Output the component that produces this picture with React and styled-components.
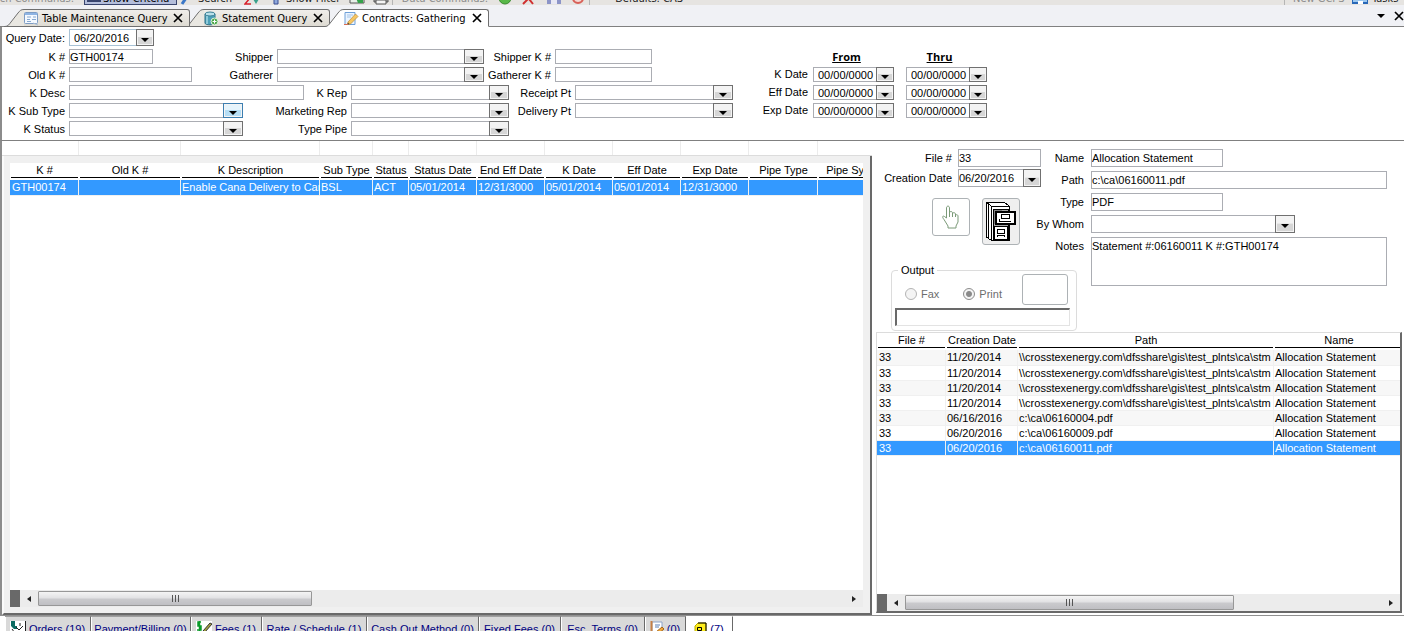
import React, { useId } from "react";
import styled, { createGlobalStyle } from "styled-components";

const queryColumns = [
  { name: "K #", width: 69 },
  { name: "Old K #", width: 102 },
  { name: "K Description", width: 139 },
  { name: "Sub Type", width: 53 },
  { name: "Status", width: 36 },
  { name: "Status Date", width: 68 },
  { name: "End Eff Date", width: 68 },
  { name: "K Date", width: 68 },
  { name: "Eff Date", width: 68 },
  { name: "Exp Date", width: 68 },
  { name: "Pipe Type", width: 69 },
  { name: "Pipe System", width: 78 },
];
const queryRows = [
  [
    "GTH00174",
    "",
    "Enable Cana Delivery to Can",
    "BSL",
    "ACT",
    "05/01/2014",
    "12/31/3000",
    "05/01/2014",
    "05/01/2014",
    "12/31/3000",
    "",
    "",
  ],
];

const fileColumns = [
  { name: "File #", width: 69 },
  { name: "Creation Date", width: 72 },
  { name: "Path", width: 256 },
  { name: "Name", width: 130 },
];
const sharePath = "\\\\crosstexenergy.com\\dfsshare\\gis\\test_plnts\\ca\\stm";
const fileRows = [
  ["33", "11/20/2014", sharePath, "Allocation Statement"],
  ["33", "11/20/2014", sharePath, "Allocation Statement"],
  ["33", "11/20/2014", sharePath, "Allocation Statement"],
  ["33", "11/20/2014", sharePath, "Allocation Statement"],
  ["33", "06/16/2016", "c:\\ca\\06160004.pdf", "Allocation Statement"],
  ["33", "06/20/2016", "c:\\ca\\06160009.pdf", "Allocation Statement"],
  ["33", "06/20/2016", "c:\\ca\\06160011.pdf", "Allocation Statement"],
];

const bottomTabs = [
  { text: "Orders (19)", width: 86, icon: "orders" },
  { text: "Payment/Billing (0)", width: 100 },
  { text: "Fees (1)", width: 71, icon: "fees" },
  { text: "Rate / Schedule (1)", width: 105 },
  { text: "Cash Out Method (0)", width: 112 },
  { text: "Fixed Fees (0)", width: 82 },
  { text: "Esc. Terms (0)", width: 84 },
  { text: "(0)", width: 41, icon: "notes" },
  { text: "(7)", width: 47, icon: "files", active: true },
];

const DownArrow = () => (
  <svg width="8" height="4" viewBox="0 0 8 4">
    <path d="M0 0h8L4 4z" fill="#000" />
  </svg>
);

const FormIcon = () => (
  <svg width="15" height="15" viewBox="0 0 15 15">
    <rect x="0.5" y="1.5" width="13" height="11" rx="1" fill="#f4f9ff" stroke="#7d9cc4" />
    <path d="M1 3h12" stroke="#8eb4e3" strokeWidth="2" />
    <path d="M3 6h4M3 8.500h3M9 6h3M8 8.500h4M3 10.500h4" stroke="#86a8d0" />
    <path d="M9 12l5 2" stroke="#a8bcd4" />
  </svg>
);

const DatabaseIcon = () => (
  <svg width="15" height="15" viewBox="0 0 15 15">
    <path d="M1 3v9c0 2.500 10 2.500 10 0V3z" fill="#4da0b8" stroke="#2f7187" />
    <ellipse cx="6" cy="3" rx="5" ry="2" fill="#b9e0ea" stroke="#3a8096" />
    <path d="M3 5v8" stroke="#a4d8e4" strokeWidth="1.500" />
    <circle cx="10.500" cy="10.500" r="3.500" fill="#4da84b" stroke="#e4f2df" />
    <path d="M8.500 10.500h4M10.500 8.500v4" stroke="#fff" />
  </svg>
);

const PencilIcon = () => (
  <svg width="15" height="15" viewBox="0 0 15 15">
    <path d="M1 1.500h10v12H1z" fill="#eaf4ff" stroke="#6fa0d8" />
    <path d="M3 4h6M3 6h4" stroke="#a4c3e6" />
    <path d="M4 11l7.500-8 2.500 2.500-7.500 7.500-3 .5z" fill="#f7c661" stroke="#b98a3a" strokeWidth=".7" />
    <path d="M3 14l1-2.500 1.500 1.500z" fill="#5b4630" />
    <path d="M0 13.500h4" stroke="#d76c52" />
  </svg>
);

const CloseIcon = () => (
  <svg width="10" height="10" viewBox="0 0 10 10">
    <path d="M1 1l8 8M9 1l-8 8" stroke="#000" strokeWidth="1.700" />
  </svg>
);

const HandIcon = () => (
  <svg width="20" height="24" viewBox="0 0 20 24">
    <path
      d="M5.500 13V3c0-2.500 3-2.500 3 0v7V8c0-2 3-2 3 0v3V9c0-2 3-1.500 3 0v2c0-2 2.500-1.500 2.500 0v6l-2 4v2h-8v-2l-4-6.500c-2.500-3-1-4 .5-3z"
      fill="#fff"
      stroke="#7b9a78"
    />
    <path d="M8.500 9v3M11.500 10v2M14.500 11v1" stroke="#7b9a78" fill="none" />
  </svg>
);

const CabinetIcon = () => (
  <svg width="32" height="42" viewBox="0 0 32 42" shapeRendering="crispEdges">
    <path d="M1 1h18l5 4v34H6l-5-3z" fill="#fff" stroke="#000" />
    <path d="M1 1l5 4h18M6 5v34M3.500 3v35" fill="none" stroke="#000" />
    <path d="M8 8h15v31H8z" fill="#a8a8a8" stroke="#000" />
    <path d="M9 9h8v14H9z" fill="#808080" />
    <path d="M11 11h19v12H11z" fill="#fff" stroke="#000" strokeWidth="2" />
    <path d="M16 13h8v4h-8z" fill="#fff" stroke="#000" />
    <path d="M14 20h12M14 18v3" stroke="#000" strokeWidth="1" />
    <path d="M9 25h13v13H9z" fill="#fff" stroke="#000" />
    <path d="M12 28h7v4h-7zM12 36v-2h7v2" fill="none" stroke="#000" />
  </svg>
);

const BottomIcon = ({ kind }) => {
  if (kind === "orders")
    return (
      <svg width="16" height="16" viewBox="0 0 16 16">
        <path d="M0 0h16v16H0z" fill="#fff" />
        <path d="M1 0h4v5h2v3H4L1 5z" fill="#0a6b62" />
        <path d="M6 6l3 3 4-4M15.500 0v16M2 8l5 7M10 2v3" stroke="#222" fill="none" />
      </svg>
    );
  if (kind === "fees")
    return (
      <svg width="16" height="16" viewBox="0 0 16 16">
        <path d="M0 0h16v16H0z" fill="#fff" />
        <path d="M5 1H2v4h3v4H1M3.500 0v11" stroke="#0a9a2a" strokeWidth="1.500" fill="none" />
        <path d="M7 10l7-8 2 1-7 8z" fill="#a8a340" stroke="#333" />
        <path d="M4 12l4 2 6-3" stroke="#222" fill="none" />
      </svg>
    );
  if (kind === "notes")
    return (
      <svg width="14" height="16" viewBox="0 0 14 16">
        <path d="M2 1h10v14H2z" fill="#fff" stroke="#8ca3c8" />
        <path d="M1.500 0v16" stroke="#c78045" strokeWidth="2" />
        <path d="M5 4h5M5 6h4" stroke="#5b7fb4" />
        <path d="M6 11l6-5 2 2-6 5z" fill="#f2a93b" stroke="#a5661a" />
      </svg>
    );
  return (
    <svg width="13" height="16" viewBox="0 0 13 16">
      <path d="M1 5l3-3h8v12l-3 2H1z" fill="#ffee1c" stroke="#b8a800" />
      <path d="M12 2v12M4 2h8M3.500 6.500h4v3h-4z" fill="none" stroke="#000" />
    </svg>
  );
};

const Arrow = styled.span`
  box-sizing: border-box;
  width: 18px;
  height: calc(100% + 2px);
  margin: -1px -1px 0 0;
  padding-top: 4px;
  border: 1px solid #707070;
  box-shadow: inset 0 0 0 1px #f4f4f4;
  background: ${({ $hot }) =>
    $hot
      ? "linear-gradient(#e5f4fc 45%, #b5def5 50%)"
      : "linear-gradient(#f3f3f3 45%, #d6d6d6 50%)"};
  border-color: ${({ $hot }) => ($hot ? "#3c7fb1" : "#707070")};
  display: flex;
  align-items: center;
  justify-content: center;
`;

const Field = ({ label, labelWidth, width, type = "text", value, hot, inset }) => {
  const id = useId();
  return (
    <FieldRow>
      <Label htmlFor={id} $width={labelWidth}>
        {label}
      </Label>
      {type === "select" && <Select id={id} width={width} hot={hot} />}
      {type === "date" && <DateBox id={id} width={width} value={value} inset={inset} />}
      {type === "text" && <Input id={id} $width={width} defaultValue={value} />}
    </FieldRow>
  );
};

const Select = ({ id, width, hot }) => (
  <Box $width={width}>
    <SelectInput id={id} defaultValue="">
      <option value=""></option>
    </SelectInput>
    <SelectArrow $hot={hot}>
      <DownArrow />
    </SelectArrow>
  </Box>
);

const DateBox = ({ id, width, value, inset = 4, name, tone }) => (
  <Box $width={width} $tone={tone}>
    <DateInput id={id} aria-label={name} defaultValue={value} $inset={inset} />
    <Arrow as="button" type="button" aria-label="Open calendar">
      <DownArrow />
    </Arrow>
  </Box>
);

const Grid = ({ columns, rows, selected, first }) => (
  <Table $width={columns.reduce((sum, c) => sum + c.width, 0)}>
    <colgroup>
      {columns.map((c) => (
        <Col key={c.name} $width={c.width} />
      ))}
    </colgroup>
    <thead>
      <tr>
        {columns.map((c) => (
          <Th key={c.name}>
            <span>{c.name}</span>
          </Th>
        ))}
      </tr>
    </thead>
    <tbody>
      {rows.map((row, l) => (
        <Tr key={l} $selected={l === selected}>
          {row.map((v, i) => (
            <Td key={i} $pad={i === 0 ? first : 1}>
              {v}
            </Td>
          ))}
        </Tr>
      ))}
    </tbody>
  </Table>
);

const ScrollBar = ({ size }) => (
  <ScrollRow>
    <Grip />
    <ScrollButton type="button" aria-label="Scroll left">
      <svg width="4" height="6" viewBox="0 0 4 6">
        <path d="M4 0v6L0 3z" fill="#222" />
      </svg>
    </ScrollButton>
    <Track>
      <Thumb style={{ width: size + "%" }}>
        <svg width="9" height="7" viewBox="0 0 9 7">
          <path d="M1.500 0v7M4.500 0v7M7.500 0v7" stroke="#555" />
        </svg>
      </Thumb>
    </Track>
    <ScrollButton type="button" aria-label="Scroll right">
      <svg width="4" height="6" viewBox="0 0 4 6">
        <path d="M0 0v6l4-3z" fill="#222" />
      </svg>
    </ScrollButton>
  </ScrollRow>
);

const WindowTab = ({ icon, text, width, active }) => (
  <Tab $width={width} $active={active}>
    <svg width="20" height="18" viewBox="0 0 20 18">
      <path
        d="M0 17.500h1c3 0 4-2 6-4.500l7-9c2-2.500 3-3.500 6-3.500v17.500H0z"
        fill={active ? "#fff" : "#e9e7e1"}
      />
      <path d="M0 17.500h1c3 0 4-2 6-4.500l7-9c2-2.500 3-3.500 6-3.500" fill="none" stroke="#6f6f6f" />
      {!active && <path d="M1 17.500h19" stroke="#6f6f6f" />}
    </svg>
    <TabBody $active={active}>
      {icon}
      <TabText type="button">{text}</TabText>
      <IconButton type="button" aria-label={"Close " + text}>
        <CloseIcon />
      </IconButton>
    </TabBody>
  </Tab>
);

const App = () => {
  return (
    <Page>
      <GlobalStyle />
      <Toolbar>
        <ToolCell $width={84} $end>
          <ToolText $muted>Search Commands:</ToolText>
        </ToolCell>
        <Pressed type="button">
          <svg width="14" height="16" viewBox="0 0 14 16">
            <path d="M0 4h14v9H0z" fill="#fff" stroke="#39456e" strokeWidth="2" />
          </svg>
          Show Criteria
        </Pressed>
        <ToolCell $width={64}>
          <svg width="14" height="16" viewBox="0 0 14 16">
            <path d="M2 15l8-12" stroke="#3c78c8" strokeWidth="3" />
          </svg>
          <ToolText>Search</ToolText>
        </ToolCell>
        <ToolCell $width={26}>
          <svg width="16" height="16" viewBox="0 0 16 16">
            <path d="M1 9h5l-5 6h6" stroke="#d8202c" strokeWidth="1.500" fill="none" />
            <path d="M9 10h6l-3 5z" fill="#3aa08c" />
          </svg>
        </ToolCell>
        <ToolCell $width={79}>
          <svg width="12" height="16" viewBox="0 0 12 16">
            <path d="M4 6h4v9H4z" fill="#8fa8dc" stroke="#3a4f94" />
          </svg>
          <ToolText>Show Filter</ToolText>
        </ToolCell>
        <ToolCell $width={24}>
          <svg width="16" height="16" viewBox="0 0 16 16">
            <path d="M1 5h12l2 3v6H1z" fill="#e8f0e8" stroke="#555" />
            <path d="M7 9h7v5H9z" fill="#35a24a" />
          </svg>
        </ToolCell>
        <ToolCell $width={19}>
          <svg width="16" height="16" viewBox="0 0 16 16">
            <path d="M1 7h14v6H1z" fill="#a8a8a8" stroke="#555" />
            <path d="M3 11h10v4H3z" fill="#f4f4f4" stroke="#555" />
          </svg>
        </ToolCell>
        <ToolCell $width={106} $line $end>
          <ToolText $muted>Data Commands:</ToolText>
        </ToolCell>
        <ToolCell $width={24}>
          <svg width="14" height="16" viewBox="0 0 14 16">
            <circle cx="7" cy="9" r="6" fill="#58b848" stroke="#3a8a30" />
          </svg>
        </ToolCell>
        <ToolCell $width={25}>
          <svg width="12" height="16" viewBox="0 0 12 16">
            <path d="M1 15L11 5M3 5l8 10" stroke="#d03030" strokeWidth="2" />
          </svg>
        </ToolCell>
        <ToolCell $width={24}>
          <svg width="14" height="16" viewBox="0 0 14 16">
            <path d="M0 2h14v13H0z" fill="#8c94c8" />
            <path d="M4 9h6v6H4z" fill="#e8e8f4" />
          </svg>
        </ToolCell>
        <ToolCell $width={18}>
          <svg width="14" height="16" viewBox="0 0 14 16">
            <circle cx="7" cy="9" r="5" fill="#f4d8d4" stroke="#d86058" strokeWidth="2" />
          </svg>
        </ToolCell>
        <ToolCell $width={104} $line $end>
          <ToolText>Defaults: CAS</ToolText>
        </ToolCell>
        <ToolSpacer />
        <ToolCell $width={68} $line>
          <ToolText $muted>New GCPS</ToolText>
        </ToolCell>
        <ToolCell $width={52}>
          <svg width="16" height="16" viewBox="0 0 16 16">
            <path d="M0 2h16v12H0z" fill="#9cc8f0" stroke="#2868b8" strokeWidth="2" />
            <path d="M6 12h5v3H6z" fill="#fff" />
          </svg>
          <ToolText>Tasks</ToolText>
        </ToolCell>
      </Toolbar>

      <TabStrip>
        <WindowTab icon={<FormIcon />} text="Table Maintenance Query" width={186} />
        <WindowTab icon={<DatabaseIcon />} text="Statement Query" width={146} />
        <WindowTab icon={<PencilIcon />} text="Contracts: Gathering" width={165} active />
        <StripTools>
          <IconButton type="button" aria-label="Window list">
            <DownArrow />
          </IconButton>
          <IconButton type="button" aria-label="Close window">
            <CloseIcon />
          </IconButton>
        </StripTools>
      </TabStrip>

      <Criteria>
        <CriteriaRows>
          <FieldRow>
            <Label htmlFor="queryDate" $width={63}>
              Query Date:
            </Label>
            <DateBox id="queryDate" width={85} value="06/20/2016" tone="#a9c3d6" />
          </FieldRow>
          <CriteriaRow>
            <Field label="K #" labelWidth={63} width={84} value="GTH00174" />
            <Field label="Shipper" labelWidth={120} width={207} type="select" />
            <Field label="Shipper K #" labelWidth={67} width={97} />
          </CriteriaRow>
          <CriteriaRow>
            <Field label="Old K #" labelWidth={63} width={123} />
            <Field label="Gatherer" labelWidth={81} width={207} type="select" />
            <Field label="Gatherer K #" labelWidth={67} width={97} />
          </CriteriaRow>
          <CriteriaRow>
            <Field label="K Desc" labelWidth={63} width={235} />
            <Field label="K Rep" labelWidth={43} width={158} type="select" />
            <Field label="Receipt Pt" labelWidth={62} width={158} type="select" />
          </CriteriaRow>
          <CriteriaRow>
            <Field label="K Sub Type" labelWidth={63} width={174} type="select" hot />
            <Field label="Marketing Rep" labelWidth={104} width={158} type="select" />
            <Field label="Delivery Pt" labelWidth={62} width={158} type="select" />
          </CriteriaRow>
          <CriteriaRow>
            <Field label="K Status" labelWidth={63} width={174} type="select" />
            <Field label="Type Pipe" labelWidth={104} width={158} type="select" />
          </CriteriaRow>
        </CriteriaRows>
        <DateGrid>
          <span />
          <DateHead>From</DateHead>
          <DateHead>Thru</DateHead>
          {["K Date", "Eff Date", "Exp Date"].map((v) => (
            <React.Fragment key={v}>
              <DateLabel>{v}</DateLabel>
              <DateBox width={81} value="00/00/0000" name={v + " from"} />
              <DateBox width={81} value="00/00/0000" name={v + " thru"} />
            </React.Fragment>
          ))}
        </DateGrid>
      </Criteria>

      <Body>
        <LeftPane>
          <Ticks>
            {queryColumns.slice(0, -1).map((c) => (
              <Tick key={c.name} $width={c.width} />
            ))}
          </Ticks>
          <QueryPanel>
            <TableArea>
              <Grid columns={queryColumns} rows={queryRows} selected={0} first={2} />
            </TableArea>
            <ScrollBar size={34} />
          </QueryPanel>
        </LeftPane>

        <RightPane>
          <Details>
            <DetailsLeft>
              <Stack $gap={2}>
                <Field label="File #" labelWidth={80} width={83} value="33" />
                <Field
                  label="Creation Date"
                  labelWidth={80}
                  width={83}
                  type="date"
                  value="06/20/2016"
                  inset={0}
                />
              </Stack>
              <Buttons>
                <ToolButton type="button" aria-label="Select" $size={38}>
                  <HandIcon />
                </ToolButton>
                <ToolButton type="button" aria-label="Open file cabinet" $size={47} $gray>
                  <CabinetIcon />
                </ToolButton>
              </Buttons>
              <Output>
                <Legend>Output</Legend>
                <OutputRow>
                  <RadioLabel>
                    <Radio type="radio" name="output" disabled />
                    Fax
                  </RadioLabel>
                  <RadioLabel>
                    <Radio type="radio" name="output" disabled defaultChecked />
                    Print
                  </RadioLabel>
                  <BlankButton type="button" aria-label="Send output" />
                </OutputRow>
                <OutputInput aria-label="Output target" />
              </Output>
            </DetailsLeft>
            <DetailsRight>
              <Field label="Name" labelWidth={43} width={132} value="Allocation Statement" />
              <Field label="Path" labelWidth={43} value="c:\ca\06160011.pdf" />
              <Field label="Type" labelWidth={43} width={132} value="PDF" />
              <Field label="By Whom" labelWidth={43} width={204} type="select" />
              <NotesRow>
                <Label htmlFor="notes" $width={43}>
                  Notes
                </Label>
                <TextArea id="notes" defaultValue="Statement #:06160011 K #:GTH00174" />
              </NotesRow>
            </DetailsRight>
          </Details>
          <FilePanel>
            <TableArea>
              <Grid columns={fileColumns} rows={fileRows} selected={6} first={2} />
            </TableArea>
            <ScrollBar size={69} />
          </FilePanel>
        </RightPane>
      </Body>

      <BottomTabs>
        {bottomTabs.map((v) => (
          <BottomTab key={v.text + v.width} type="button" $width={v.width} $active={v.active}>
            {v.icon && <BottomIcon kind={v.icon} />}
            {v.text}
          </BottomTab>
        ))}
      </BottomTabs>
    </Page>
  );
};

export default App;

const GlobalStyle = createGlobalStyle`
  body {
    margin: 0;
    overflow: hidden;
    background-color: #fff;
  }
  body, button, input, select, textarea {
    font-family: "Liberation Sans", Arial, sans-serif;
    font-size: 11px;
    color: #000;
  }
  button, input, select, textarea {
    box-sizing: border-box;
    margin: 0;
    padding: 0;
    border-radius: 0;
  }
  svg {
    display: block;
    flex: none;
  }
`;

const Page = styled.div`
  display: flex;
  flex-direction: column;
  height: 100vh;
  overflow: hidden;
`;

/* toolbar, scrolled up so that only its lower edge shows */
const Toolbar = styled.div`
  display: flex;
  align-items: flex-end;
  flex: none;
  height: 5px;
  overflow: hidden;
  background-color: #e6e4e1;
`;
const ToolCell = styled.div`
  box-sizing: border-box;
  display: flex;
  align-items: flex-end;
  gap: 4px;
  flex: none;
  width: ${({ $width }) => $width + "px"};
  height: 20px;
  padding-left: ${({ $line }) => ($line ? "8px" : "0")};
  border-left: ${({ $line }) => ($line ? "1px solid #b5b5b5" : "0")};
  justify-content: ${({ $end }) => ($end ? "flex-end" : "flex-start")};
  padding-right: ${({ $end }) => ($end ? "10px" : "0")};
`;
const ToolText = styled.span`
  font-family: "DejaVu Sans Condensed", Roboto, sans-serif;
  line-height: 12px;
  white-space: nowrap;
  color: ${({ $muted }) => ($muted ? "#8c8c8c" : "#222")};
`;
const ToolSpacer = styled.div`
  flex: 1;
`;
const Pressed = styled.button`
  display: flex;
  align-items: flex-end;
  gap: 2px;
  width: 93px;
  height: 22px;
  margin-right: 3px;
  padding: 0 2px;
  border: 1px solid #39456e;
  background-color: #b4bedb;
  font-family: "DejaVu Sans Condensed", Roboto, sans-serif;
  line-height: 10px;
  white-space: nowrap;
`;

const TabStrip = styled.div`
  display: flex;
  align-items: flex-end;
  flex: none;
  height: 22px;
  padding-left: 4px;
  background: linear-gradient(#f0f1f5 21px, #808080 21px);
`;
const Tab = styled.div`
  display: flex;
  position: relative;
  z-index: ${({ $active }) => ($active ? 2 : 0)};
  width: ${({ $width }) => $width + "px"};
  height: 18px;
  & + & {
    margin-left: -6px;
  }
  &:first-child {
    z-index: 1;
  }
`;
const TabBody = styled.div`
  box-sizing: border-box;
  display: flex;
  align-items: center;
  flex: 1;
  gap: 3px;
  height: 18px;
  padding-right: 6px;
  border: 1px solid #6f6f6f;
  border-left: 0;
  border-bottom-color: ${({ $active }) => ($active ? "#fff" : "#6f6f6f")};
  border-radius: 0 3px 0 0;
  background: ${({ $active }) => ($active ? "#fff" : "linear-gradient(#f0eeea, #dedbd2)")};
`;
const TabText = styled.button`
  flex: 1;
  border: 0;
  background: none;
  font-family: "DejaVu Sans Condensed", Roboto, sans-serif;
  text-align: left;
  white-space: nowrap;
`;
const IconButton = styled.button`
  border: 0;
  background: none;
`;
const StripTools = styled.div`
  display: flex;
  align-items: center;
  gap: 9px;
  height: 22px;
  margin-left: auto;
`;

const Criteria = styled.div`
  display: flex;
  align-items: flex-end;
  flex: none;
  gap: 25px;
  padding: 2px 0 4px;
  border-left: 2px solid #8c8c8c;
  border-bottom: 1px solid #808080;
`;
const CriteriaRows = styled.div`
  display: flex;
  flex-direction: column;
  gap: 3px;
  width: 731px;
  > :first-child {
    height: 17px;
  }
`;
const CriteriaRow = styled.div`
  display: flex;
  height: 15px;
`;
const FieldRow = styled.div`
  display: flex;
  gap: 4px;
  height: 100%;
`;
const Label = styled.label`
  display: flex;
  flex: none;
  align-items: center;
  justify-content: flex-end;
  width: ${({ $width }) => $width + "px"};
  white-space: nowrap;
`;
const Input = styled.input`
  width: ${({ $width }) => ($width ? $width + "px" : "100%")};
  height: 100%;
  border: 1px solid #abadb3;
  background-color: #fff;
`;
const Box = styled.div`
  box-sizing: border-box;
  position: relative;
  display: flex;
  flex: none;
  width: ${({ $width }) => $width + "px"};
  height: 100%;
  border: 1px solid ${({ $tone }) => $tone || "#abadb3"};
  background-color: #fff;
`;
const SelectInput = styled.select`
  width: 100%;
  height: 100%;
  border: 0;
  background: none;
  appearance: none;
`;
const SelectArrow = styled(Arrow)`
  position: absolute;
  top: 0;
  right: 0;
  width: 20px;
  pointer-events: none;
`;
const DateInput = styled.input`
  flex: 1;
  min-width: 0;
  height: 100%;
  padding-left: ${({ $inset }) => $inset + "px"};
  border: 0;
  background: none;
`;
const DateGrid = styled.div`
  display: grid;
  grid-template-columns: 43px 81px 81px;
  grid-auto-rows: 15px;
  column-gap: 12px;
  row-gap: 3px;
  padding-bottom: 18px;
  > :nth-child(3n + 1) {
    margin-right: -7px;
  }
`;
const DateHead = styled.div`
  padding-right: 14px;
  font: bold 11px "Open Sans", sans-serif;
  line-height: 15px;
  text-align: center;
  text-decoration: underline;
`;
const DateLabel = styled.div`
  line-height: 15px;
  text-align: right;
  white-space: nowrap;
`;

const Body = styled.div`
  display: grid;
  grid-template-columns: minmax(0, 1fr) 532px;
  flex: 1;
  min-height: 0;
  border-bottom: 1px solid #909090;
`;
const LeftPane = styled.div`
  display: flex;
  flex-direction: column;
  min-width: 0;
  border-left: 2px solid #8c8c8c;
`;
const Ticks = styled.div`
  display: flex;
  height: 14px;
  padding-left: 8px;
  border-bottom: 1px solid #dcdcdc;
`;
const Tick = styled.div`
  box-sizing: border-box;
  flex: none;
  width: ${({ $width }) => $width + "px"};
  border-right: 1px solid #ececec;
`;
const QueryPanel = styled.div`
  display: flex;
  flex-direction: column;
  flex: 1;
  min-height: 0;
  padding: 7px 7px 6px 6px;
  border-left: 2px solid #fafafa;
  border-right: 2px solid #696969;
  border-bottom: 2px solid #696969;
  background-color: #f0f0f0;
`;
const TableArea = styled.div`
  flex: 1;
  min-height: 0;
  overflow: hidden;
  background-color: #fff;
`;
const Table = styled.table`
  width: ${({ $width }) => $width + "px"};
  table-layout: fixed;
  border-collapse: collapse;
`;
const Col = styled.col`
  width: ${({ $width }) => $width + "px"};
`;
const Th = styled.th`
  height: 17px;
  padding: 0;
  font-weight: normal;
  white-space: nowrap;
  vertical-align: top;
  span {
    display: block;
    margin: 0 1px;
    line-height: 14px;
    border-bottom: 1px solid #000;
    text-align: center;
  }
`;
const Td = styled.td`
  box-sizing: border-box;
  height: 15px;
  padding: 0 0 0 ${({ $pad }) => $pad + "px"};
  line-height: 14px;
  border-bottom: 1px solid #f0f0f0;
  white-space: nowrap;
  overflow: hidden;
  box-shadow: inset -1px 0 #f0f0f0;
`;
const Tr = styled.tr`
  background-color: #fff;
  &:nth-child(odd) {
    background-color: #f7f7f7;
  }
  ${({ $selected }) =>
    $selected &&
    `
    && {
      background-color: #3399ff;
      color: #fff;
    }
  `}
`;

const ScrollRow = styled.div`
  display: flex;
  flex: none;
  height: 17px;
  background-color: #ececec;
`;
const Grip = styled.div`
  width: 10px;
  background-color: #696969;
`;
const ScrollButton = styled.button`
  display: flex;
  align-items: center;
  justify-content: center;
  width: 18px;
  border: 0;
  background: none;
`;
const Track = styled.div`
  flex: 1;
`;
const Thumb = styled.div`
  box-sizing: border-box;
  display: flex;
  align-items: center;
  justify-content: center;
  height: 15px;
  margin-top: 1px;
  border: 1px solid #979797;
  border-radius: 1px;
  background: linear-gradient(#f4f4f4, #e2e2e4 45%, #cacacd 55%, #bfbfc3);
`;

const RightPane = styled.div`
  display: flex;
  flex-direction: column;
  min-width: 0;
  padding: 8px 2px 2px 4px;
`;
const Details = styled.div`
  display: flex;
  flex: none;
`;
const DetailsLeft = styled.div`
  flex: none;
  width: 165px;
  margin-left: -4px;
`;
const Stack = styled.div`
  display: flex;
  flex-direction: column;
  gap: ${({ $gap }) => $gap + "px"};
  > div {
    height: 18px;
    gap: 6px;
  }
`;
const DetailsRight = styled.div`
  display: flex;
  flex-direction: column;
  flex: 1;
  gap: 4px;
  min-width: 0;
  padding-left: 4px;
  padding-right: 15px;
  > div {
    gap: 7px;
    height: 18px;
  }
`;
const NotesRow = styled.div`
  display: flex;
  > label {
    height: 18px;
  }
`;
const TextArea = styled.textarea`
  flex: 1;
  height: 49px;
  border: 1px solid #abadb3;
  line-height: 16px;
  resize: none;
`;
const Buttons = styled.div`
  display: flex;
  align-items: flex-start;
  gap: 12px;
  padding: 11px 0 0 60px;
`;
const ToolButton = styled.button`
  display: flex;
  align-items: center;
  justify-content: center;
  flex: none;
  width: 38px;
  height: ${({ $size }) => $size + "px"};
  border: 1px solid #adb2b5;
  border-radius: 3px;
  background-color: ${({ $gray }) => ($gray ? "#efefef" : "#fff")};
`;
const Output = styled.fieldset`
  box-sizing: border-box;
  width: 186px;
  min-width: 0;
  height: 67px;
  margin: 19px 0 1px 19px;
  padding: 0 6px 0 3px;
  border: 1px solid #dcdcdc;
  border-radius: 4px;
`;
const Legend = styled.legend`
  height: 13px;
  margin-left: 3px;
  padding: 0 3px;
`;
const OutputRow = styled.div`
  display: flex;
  align-items: center;
  height: 31px;
  margin: -3px 2px 3px 10px;
`;
const RadioLabel = styled.label`
  display: flex;
  align-items: center;
  gap: 4px;
  padding-top: 8px;
  color: #6d6d6d;
  & + & {
    margin-left: 24px;
  }
`;
const Radio = styled.input`
  appearance: none;
  width: 12px;
  height: 12px;
  border: 1px solid #b4b4b4;
  border-radius: 50%;
  background-color: #f4f4f4;
  &:checked {
    border-color: #8c8c8c;
    background: radial-gradient(#8a8a8a 35%, #f4f4f4 50%);
  }
`;
const BlankButton = styled.button`
  flex: none;
  width: 46px;
  height: 31px;
  margin-left: auto;
  border: 1px solid #adb2b5;
  border-radius: 3px;
  background-color: #fff;
`;
const OutputInput = styled.input`
  width: 100%;
  height: 18px;
  border: 1px solid #e3e3e3;
  border-top: 2px solid #696969;
  border-left: 2px solid #696969;
`;
const FilePanel = styled.div`
  display: flex;
  flex-direction: column;
  flex: 1;
  min-height: 0;
  border: 1px solid #dcdcdc;
  border-right: 2px solid #696969;
  border-bottom: 2px solid #696969;
`;

const BottomTabs = styled.div`
  display: flex;
  flex: none;
  height: 15px;
  padding-left: 5px;
  overflow: hidden;
`;
const BottomTab = styled.button`
  display: flex;
  align-items: center;
  justify-content: center;
  gap: 3px;
  flex: none;
  width: ${({ $width }) => $width + "px"};
  height: 24px;
  border: 0;
  border-top: 1px solid ${({ $active }) => ($active ? "#fff" : "#a0a0a0")};
  border-right: 1px solid #696969;
  box-shadow: inset 1px 0 #fff;
  background-color: ${({ $active }) => ($active ? "#fff" : "#d9d9d9")};
  color: #00007f;
`;
